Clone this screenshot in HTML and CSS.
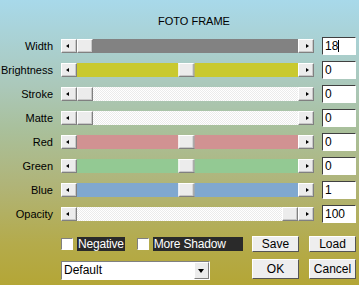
FILE: index.html
```html
<!DOCTYPE html>
<html lang="en">

<head>
  <meta charset="UTF-8">
  <meta name="viewport" content="width=device-width, initial-scale=1.0">
  <title>Foto Frame</title>
  <link rel="stylesheet" href="styles.css">
</head>

<body>
  <div class="dialog">
    <h1 class="title">FOTO FRAME</h1>

    <div class="sliders">
      <label class="name">Width</label>
      <div class="bar">
        <span class="arrow left"></span>
        <div class="track gray"><span class="thumb" style="left: 0%"></span></div>
        <span class="arrow right"></span>
      </div>
      <div class="value">18<span class="caret"></span></div>

      <label class="name">Brightness</label>
      <div class="bar">
        <span class="arrow left"></span>
        <div class="track yellow"><span class="thumb" style="left: 50%"></span></div>
        <span class="arrow right"></span>
      </div>
      <div class="value">0</div>

      <label class="name">Stroke</label>
      <div class="bar">
        <span class="arrow left"></span>
        <div class="track plain"><span class="thumb" style="left: 0%"></span></div>
        <span class="arrow right"></span>
      </div>
      <div class="value">0</div>

      <label class="name">Matte</label>
      <div class="bar">
        <span class="arrow left"></span>
        <div class="track plain"><span class="thumb" style="left: 0%"></span></div>
        <span class="arrow right"></span>
      </div>
      <div class="value">0</div>

      <label class="name">Red</label>
      <div class="bar">
        <span class="arrow left"></span>
        <div class="track red"><span class="thumb" style="left: 50%"></span></div>
        <span class="arrow right"></span>
      </div>
      <div class="value">0</div>

      <label class="name">Green</label>
      <div class="bar">
        <span class="arrow left"></span>
        <div class="track green"><span class="thumb" style="left: 50%"></span></div>
        <span class="arrow right"></span>
      </div>
      <div class="value">0</div>

      <label class="name">Blue</label>
      <div class="bar">
        <span class="arrow left"></span>
        <div class="track blue"><span class="thumb" style="left: 50%"></span></div>
        <span class="arrow right"></span>
      </div>
      <div class="value">1</div>

      <label class="name">Opacity</label>
      <div class="bar">
        <span class="arrow left"></span>
        <div class="track plain"><span class="thumb" style="left: 100%"></span></div>
        <span class="arrow right"></span>
      </div>
      <div class="value">100</div>
    </div>

    <div class="bottom">
      <div class="checks">
        <span class="check"><span class="box"></span><span class="check-text">Negative</span></span>
        <span class="check"><span class="box"></span><span class="check-text wide">More Shadow</span></span>
      </div>
      <div class="buttons">
        <button type="button" class="btn">Save</button>
        <button type="button" class="btn">Load</button>
      </div>

      <div class="select">
        <span class="select-text">Default</span>
        <span class="select-arrow"></span>
      </div>
      <div class="buttons">
        <button type="button" class="btn tall">OK</button>
        <button type="button" class="btn tall">Cancel</button>
      </div>
    </div>
  </div>
</body>

</html>
```

FILE: styles.css
```css
* {
  margin: 0;
  padding: 0;
  box-sizing: border-box;

  font-family: "Liberation Sans", Arial, sans-serif;
}

html,
body {
  width: 359px;
  height: 285px;
  overflow: hidden;
}

body {
  background: linear-gradient(to bottom, #a8d9ea 0%, #abc8ba 30%, #a9c09c 45%, #b0b478 65%, #b4ab4c 85%, #b4a636 100%);
  color: #000;
  font-size: 11px;
}

.dialog {
  padding-top: 15px;
}

.title {
  font-size: 11px;
  font-weight: normal;
  height: 22px;
  padding-left: 158px;
  line-height: 13px;
}

.sliders {
  display: grid;
  grid-template-columns: 53px 253px 34px;
  grid-auto-rows: 18px;
  column-gap: 8px;
  row-gap: 6px;
}

.name {
  text-align: right;
  line-height: 18px;
}

.bar {
  display: flex;
  height: 14px;
  margin-top: 2px;
}

.arrow,
.thumb {
  width: 16px;
  height: 14px;
  background-color: #ececec;
  border: 1px solid;
  border-color: #fff #808080 #808080 #fff;
  box-shadow: inset -1px -1px 0 #c8c8c8;
}

.arrow {
  position: relative;
  flex: none;
}

.arrow::after {
  content: "";
  position: absolute;
  top: 4px;
  border: 2px solid transparent;
  border-width: 2px 3px;
}

.arrow.left::after {
  left: 4px;
  border-right-color: #000;
  border-left-width: 0;
}

.arrow.right::after {
  left: 7px;
  border-left-color: #000;
  border-right-width: 0;
}

.track {
  flex: 1;
  position: relative;
}

.thumb {
  position: absolute;
  top: 0;
}

.track .thumb[style="left: 50%"] {
  transform: translateX(-60%);
}

.track .thumb[style="left: 100%"] {
  transform: translateX(-100%);
}

.gray {
  background: #828282;
}

.yellow {
  background: #c9c92e;
}

.plain {
  background: repeating-conic-gradient(#ffffff 0 25%, #ebebeb 0 50%) 0 0 / 2px 2px;
}

.red {
  background: #d19292;
}

.green {
  background: #93c993;
}

.blue {
  background: #80a8cf;
}

.value {
  background: #fff;
  border: 1px solid;
  border-color: #404040 #fff #fff #404040;
  padding-left: 2px;
  line-height: 16px;
  font-size: 12px;
}

.caret {
  display: inline-block;
  width: 1px;
  height: 12px;
  background: #000;
  vertical-align: -2px;
}

.bottom {
  display: grid;
  grid-template-columns: 191px 105px;
  grid-template-rows: 16px 20px;
  row-gap: 7px;
  margin-top: 13px;
  padding-left: 61px;
}

.checks {
  display: flex;
  gap: 12px;
}

.check {
  display: flex;
  align-items: center;
  gap: 4px;
}

.box {
  width: 12px;
  height: 12px;
  background: #fff;
  border: 1px solid;
  border-color: #808080 #fff #fff #808080;
}

.check-text {
  background: #2a2a2a;
  color: #fff;
  font-size: 12px;
  line-height: 14px;
  padding: 0 1px;
  white-space: nowrap;
  letter-spacing: -0.2px;
}

.check-text.wide {
  width: 90px;
}

.buttons {
  display: flex;
  gap: 10px;
}

.btn {
  width: 47px;
  height: 16px;
  background: #eeeeee;
  border: 1px solid;
  border-color: #fff #555 #555 #fff;
  font-size: 12px;
  font-family: "Liberation Sans", Arial, sans-serif;
  line-height: 14px;
}

.btn.tall {
  height: 20px;
}

.select {
  display: flex;
  width: 149px;
  height: 19px;
  margin-top: 2px;
  background: #fff;
  border: 1px solid;
  border-color: #808080 #fff #fff #808080;
}

.select-text {
  flex: 1;
  padding-left: 2px;
  line-height: 17px;
  font-size: 12px;
}

.select-arrow {
  position: relative;
  width: 15px;
  background: #ececec;
  border: 1px solid;
  border-color: #fff #808080 #808080 #fff;
}

.select-arrow::after {
  content: "";
  position: absolute;
  left: 3px;
  top: 6px;
  border: 3px solid transparent;
  border-width: 4px 3.5px 0;
  border-top-color: #000;
}
```
